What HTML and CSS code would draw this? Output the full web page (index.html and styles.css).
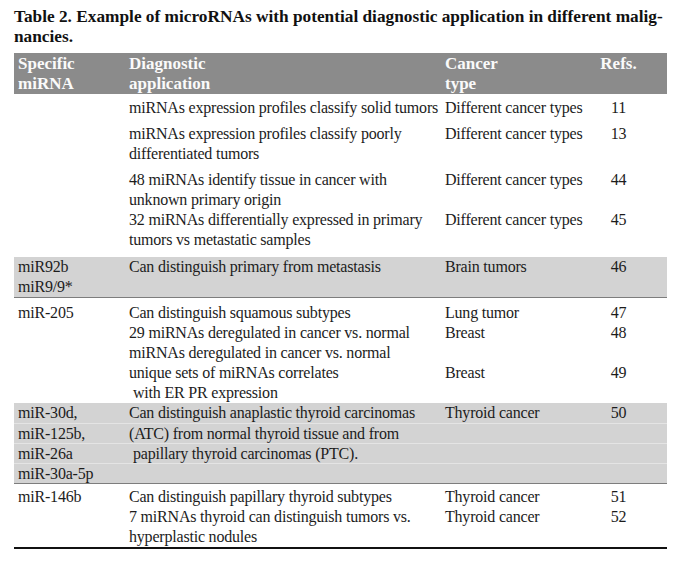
FILE: index.html
```html
<!DOCTYPE html>
<html>
<head>
<meta charset="utf-8">
<link rel="stylesheet" href="styles.css">
</head>
<body>
<div class="page">
  <h1 class="title">Table 2. Example of microRNAs with potential diagnostic application in different malig-<br>nancies.</h1>
  <table class="tbl">
    <colgroup>
      <col class="c1"><col class="c2"><col class="c3"><col class="c4">
    </colgroup>
    <thead>
      <tr class="head">
        <th>Specific<br>miRNA</th>
        <th>Diagnostic<br>application</th>
        <th>Cancer<br>type</th>
        <th class="ref">Refs.</th>
      </tr>
    </thead>
    <tbody>
      <tr class="pt4">
        <td></td><td>miRNAs expression profiles classify solid tumors</td><td>Different cancer types</td><td class="ref">11</td>
      </tr>
      <tr class="pt6">
        <td></td><td>miRNAs expression profiles classify poorly<br>differentiated tumors</td><td>Different cancer types</td><td class="ref">13</td>
      </tr>
      <tr class="pt6">
        <td></td><td>48 miRNAs identify tissue in cancer with<br>unknown primary origin</td><td>Different cancer types</td><td class="ref">44</td>
      </tr>
      <tr class="pb7">
        <td></td><td>32 miRNAs differentially expressed in primary<br>tumors vs metastatic samples</td><td>Different cancer types</td><td class="ref">45</td>
      </tr>
      <tr class="band band-end">
        <td>miR92b<br>miR9/9*</td><td>Can distinguish primary from metastasis</td><td>Brain tumors</td><td class="ref">46</td>
      </tr>
      <tr class="pt5">
        <td>miR-205</td><td>Can distinguish squamous subtypes</td><td>Lung tumor</td><td class="ref">47</td>
      </tr>
      <tr>
        <td></td><td>29 miRNAs deregulated in cancer vs. normal</td><td>Breast</td><td class="ref">48</td>
      </tr>
      <tr>
        <td></td><td>miRNAs deregulated in cancer vs. normal</td><td></td><td class="ref"></td>
      </tr>
      <tr>
        <td></td><td>unique sets of miRNAs correlates</td><td>Breast</td><td class="ref">49</td>
      </tr>
      <tr>
        <td></td><td class="indent">with ER PR expression</td><td></td><td class="ref"></td>
      </tr>
      <tr class="band">
        <td>miR-30d,</td><td>Can distinguish anaplastic thyroid carcinomas</td><td>Thyroid cancer</td><td class="ref">50</td>
      </tr>
      <tr class="band sep">
        <td>miR-125b,</td><td>(ATC) from normal thyroid tissue and from</td><td></td><td class="ref"></td>
      </tr>
      <tr class="band sep">
        <td>miR-26a</td><td class="indent">papillary thyroid carcinomas (PTC).</td><td></td><td class="ref"></td>
      </tr>
      <tr class="band sep band-end">
        <td>miR-30a-5p</td><td></td><td></td><td class="ref"></td>
      </tr>
      <tr class="pt3">
        <td>miR-146b</td><td>Can distinguish papillary thyroid subtypes</td><td>Thyroid cancer</td><td class="ref">51</td>
      </tr>
      <tr>
        <td></td><td>7 miRNAs thyroid can distinguish tumors vs.</td><td>Thyroid cancer</td><td class="ref">52</td>
      </tr>
      <tr class="last">
        <td></td><td>hyperplastic nodules</td><td></td><td class="ref"></td>
      </tr>
    </tbody>
  </table>
</div>
</body>
</html>
```

FILE: styles.css
```css
html, body {
  margin: 0;
  padding: 0;
  background: #ffffff;
}

.page {
  padding: 7px 15px 0 14px;
  font-family: "Liberation Serif", "Times New Roman", serif;
  color: #1c1c1c;
}

.title {
  margin: 0;
  font-size: 17.3px;
  line-height: 20px;
  font-weight: bold;
  color: #111;
  white-space: nowrap;
}

.tbl {
  margin-top: 6px;
  width: 653px;
  table-layout: fixed;
  border-collapse: collapse;
  border-spacing: 0;
  font-size: 16px;
  line-height: 20px;
  letter-spacing: -0.2px;
}

.c1 { width: 111px; }
.c2 { width: 316px; }
.c3 { width: 155px; }
.c4 { width: 71px; }

.tbl th,
.tbl td {
  padding: 0 0 0 4px;
  text-align: left;
  vertical-align: top;
  white-space: nowrap;
}

.tbl .ref {
  padding-right: 30px;
  text-align: center;
}

.head th {
  background: #8b8b8b;
  color: #fafafa;
  font-size: 17px;
  font-weight: bold;
  line-height: 20px;
  letter-spacing: 0;
  height: 41px;
  padding-top: 1px;
  box-sizing: border-box;
}

.pt3 td { padding-top: 3px; }
.pt4 td { padding-top: 4px; }
.pt5 td { padding-top: 5px; }
.pt6 td { padding-top: 6px; }
.pb7 td { padding-bottom: 7px; }

.band td {
  background: #d3d3d3;
}

.band.sep td {
  border-top: 1px solid #e4e4e4;
  line-height: 19px;
}

.band-end td {
  border-bottom: 1px solid #7d7d7d;
}

.last td {
  border-bottom: 2px solid #111;
}

.indent {
  text-indent: 4px;
}
```
